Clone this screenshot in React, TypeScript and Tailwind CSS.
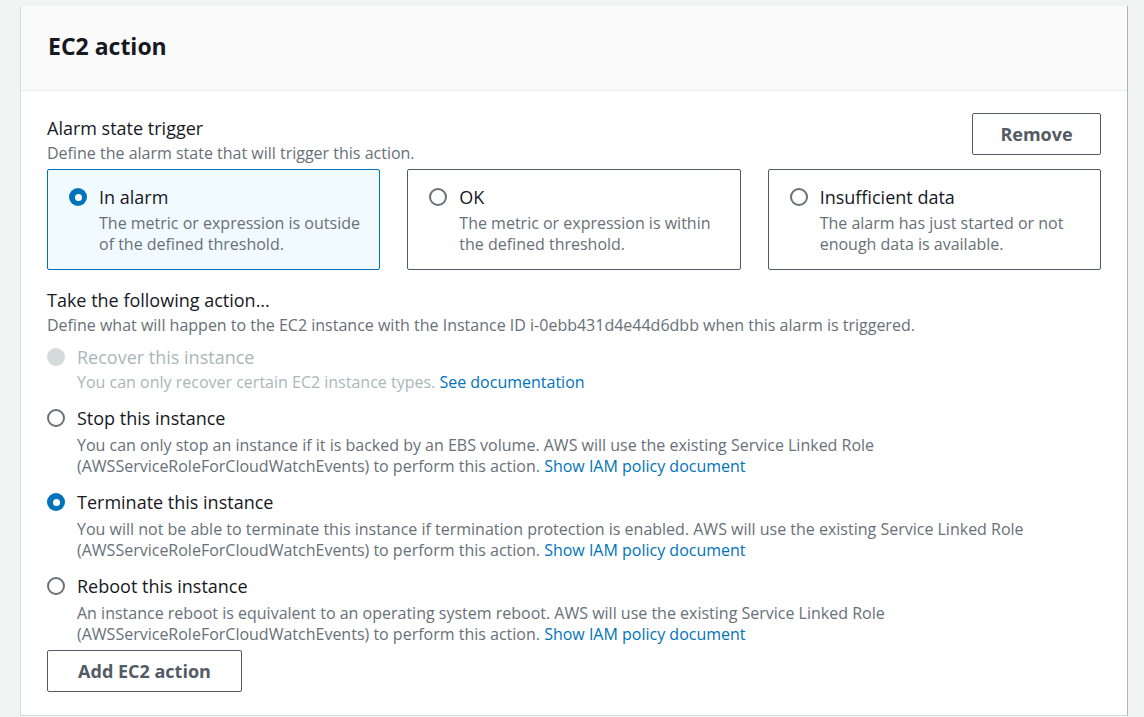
import React from "react"

const font = { fontFamily: '"Open Sans", "Noto Sans", sans-serif' }

const Radio = ({ checked, disabled }: { checked?: boolean; disabled?: boolean }) => {
	if (disabled) return <span className="block h-[18px] w-[18px] shrink-0 rounded-full bg-[#d5dbdb]" />
	if (checked)
		return (
			<span className="flex h-[18px] w-[18px] shrink-0 items-center justify-center rounded-full bg-[#0073bb]">
				<span className="h-[7px] w-[7px] rounded-full bg-white" />
			</span>
		)
	return <span className="block h-[18px] w-[18px] shrink-0 rounded-full border-2 border-[#687078] bg-white" />
}

const TILES = [
	{ title: "In alarm", desc: "The metric or expression is outside of the defined threshold.", checked: true },
	{ title: "OK", desc: "The metric or expression is within the defined threshold." },
	{ title: "Insufficient data", desc: "The alarm has just started or not enough data is available." },
]

const ACTIONS = [
	{
		title: "Stop this instance",
		desc: "You can only stop an instance if it is backed by an EBS volume. AWS will use the existing Service Linked Role (AWSServiceRoleForCloudWatchEvents) to perform this action.",
	},
	{
		title: "Terminate this instance",
		desc: "You will not be able to terminate this instance if termination protection is enabled. AWS will use the existing Service Linked Role (AWSServiceRoleForCloudWatchEvents) to perform this action.",
		checked: true,
	},
	{
		title: "Reboot this instance",
		desc: "An instance reboot is equivalent to an operating system reboot. AWS will use the existing Service Linked Role (AWSServiceRoleForCloudWatchEvents) to perform this action.",
	},
]

export default function App() {
	return (
		<div className="h-[717px] w-[1144px] overflow-hidden bg-[#f2f3f3] pl-[20px] pr-[16px] pt-[6px]" style={font}>
			<div className="h-[710px] border-b border-l border-r border-[#d5dbdb] border-r-[#aab7b8] bg-white">
				<div className="flex h-[85px] items-center border-b border-[#eaeded] bg-[#fafafa] px-[27px] pb-[4px]">
					<h2 className="text-[23px] font-bold text-[#16191f]">EC2 action</h2>
				</div>
				<div className="px-[26px] pt-[25px]">
					<div className="flex items-start justify-between">
						<div>
							<div className="text-[18px] leading-[24px] text-[#16191f]">Alarm state trigger</div>
							<div className="mt-[3px] text-[16px] leading-[21px] text-[#687078]">
								Define the alarm state that will trigger this action.
							</div>
						</div>
						<button className="mt-[-3px] h-[42px] w-[129px] rounded-[2px] border border-[#545b64] text-[18px] font-bold text-[#545b64]">
							Remove
						</button>
					</div>
					<div className="mt-[5px] grid grid-cols-3 gap-[27px]">
						{TILES.map(t => (
							<div
								key={t.title}
								className={
									t.checked
										? "flex h-[101px] gap-[12px] rounded-[2px] border border-[#0073bb] bg-[#f1faff] pl-[21px] pr-[14px] pt-[15px]"
										: "flex h-[101px] gap-[12px] rounded-[2px] border border-[#545b64] bg-white pl-[21px] pr-[14px] pt-[15px]"
								}
							>
								<div className="pt-[3px]">
									<Radio checked={t.checked} />
								</div>
								<div>
									<div className="text-[18px] leading-[24px] text-[#16191f]">{t.title}</div>
									<div className="mt-[4px] text-[16px] leading-[21px] text-[#687078]">{t.desc}</div>
								</div>
							</div>
						))}
					</div>
					<div className="mt-[18px] text-[18px] leading-[24px] text-[#16191f]">Take the following action...</div>
					<div className="mt-[3px] text-[16px] leading-[21px] text-[#687078]">
						Define what will happen to the EC2 instance with the Instance ID i-0ebb431d4e44d6dbb when this alarm is
						triggered.
					</div>
					<div className="mt-[9px] flex gap-[12px]">
						<div className="pt-[3px]">
							<Radio disabled />
						</div>
						<div>
							<div className="text-[18px] leading-[24px] text-[#aab7b8]">Recover this instance</div>
							<div className="mt-[3px] text-[16px] leading-[21px] text-[#aab7b8]">
								You can only recover certain EC2 instance types.{" "}
								<span className="text-[#0073bb]">See documentation</span>
							</div>
						</div>
					</div>
					{ACTIONS.map(a => (
						<div key={a.title} className="mt-[13px] flex gap-[12px]">
							<div className="pt-[3px]">
								<Radio checked={a.checked} />
							</div>
							<div>
								<div className="text-[18px] leading-[24px] text-[#16191f]">{a.title}</div>
								<div className="mt-[5px] text-[16px] leading-[21px] text-[#687078]">
									{a.desc} <span className="text-[#0073bb]">Show IAM policy document</span>
								</div>
							</div>
						</div>
					))}
					<button className="mt-[5px] h-[42px] w-[195px] rounded-[2px] border border-[#545b64] text-[18px] font-bold text-[#545b64]">
						Add EC2 action
					</button>
				</div>
			</div>
		</div>
	)
}
